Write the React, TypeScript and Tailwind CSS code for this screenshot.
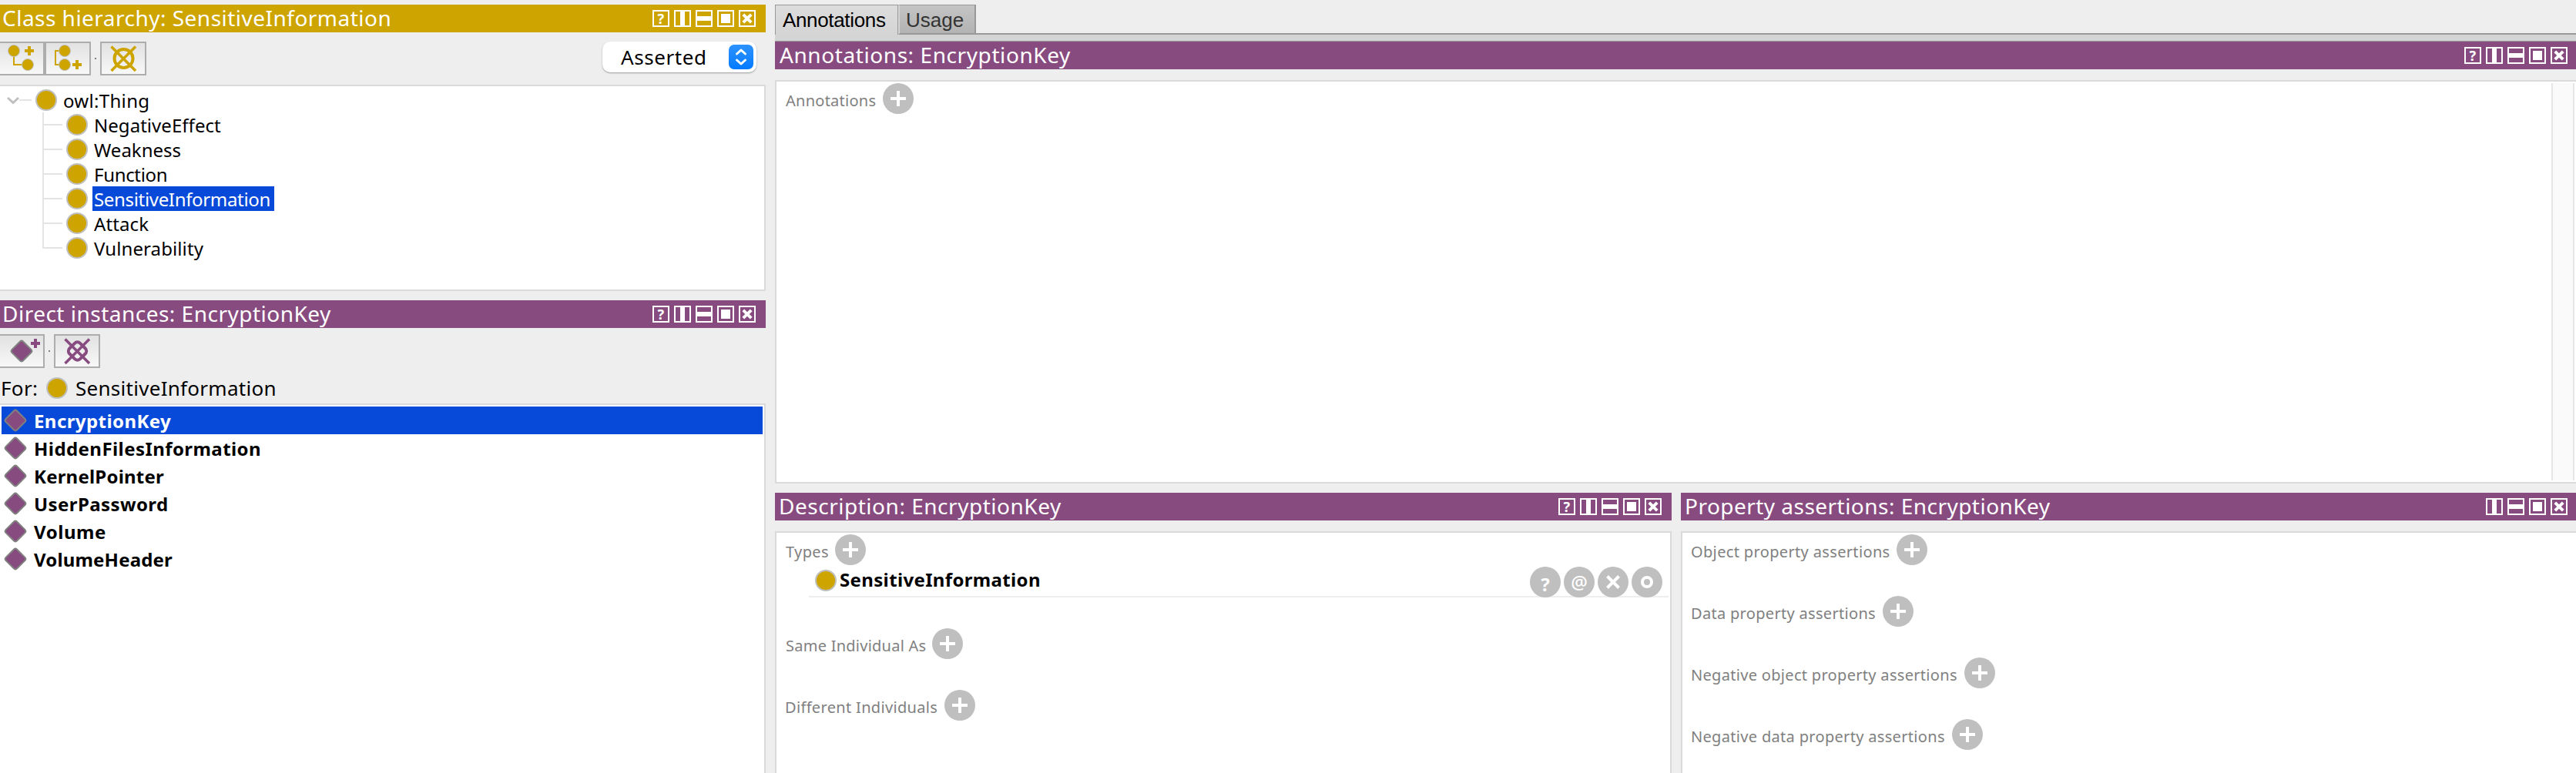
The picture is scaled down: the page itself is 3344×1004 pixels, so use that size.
import type { ReactNode } from 'react';

function TitleIcons({ help = true }: { help?: boolean }) {
  return (
    <div className="flex gap-1.5">
      {help && (
        <span className="flex size-[22px] items-center justify-center border-2 border-white text-[18px] leading-none font-bold text-white">
          ?
        </span>
      )}
      <span className="flex size-[22px] justify-center border-2 border-white">
        <span className="w-1.5 bg-white" />
      </span>
      <span className="flex size-[22px] items-center border-2 border-white">
        <span className="h-1.5 w-full bg-white" />
      </span>
      <span className="flex size-[22px] items-center justify-center border-2 border-white">
        <span className="size-3 bg-white" />
      </span>
      <span className="flex size-[22px] items-center justify-center border-2 border-white">
        <svg className="size-[14px]" viewBox="0 0 14 14" stroke="white" strokeWidth="4">
          <path d="M1.8 1.8 12.2 12.2M12.2 1.8 1.8 12.2" />
        </svg>
      </span>
    </div>
  );
}

function TitleBar({ title, className, help }: { title: string; className: string; help?: boolean }) {
  return (
    <div className={`flex h-9 shrink-0 items-center justify-between text-[28px] leading-9 text-white ${className}`}>
      <span className="-mt-0.5 whitespace-nowrap">{title}</span>
      <TitleIcons help={help} />
    </div>
  );
}

function ToolButton({ children }: { children: ReactNode }) {
  return (
    <div className="h-11 w-[60px] shrink-0 border-2 border-[#adadad] bg-linear-to-b from-[#e2e2e2] to-[#f8f8f8]">
      <svg className="h-10 w-14" viewBox="0 0 56 40" fill="none">
        {children}
      </svg>
    </div>
  );
}

function ClassDot({ className = '' }: { className?: string }) {
  return <span className={`size-7 shrink-0 rounded-full border-2 border-[#bfbfbf] bg-[#cda400] ${className}`} />;
}

function IndividualDiamond() {
  return (
    <svg className="size-8 shrink-0" viewBox="0 0 32 32">
      <rect x="5.8" y="5.8" width="20.4" height="20.4" rx="3" transform="rotate(45 16 16)" fill="#874b80" stroke="#808080" strokeWidth="2" />
    </svg>
  );
}

const classes: [string, string][] = [
  ['NegativeEffect', 'tracking-[0.04px]'],
  ['Weakness', 'tracking-normal'],
  ['Function', 'tracking-[-0.32px]'],
  ['SensitiveInformation', 'tracking-[-0.33px]'],
  ['Attack', 'tracking-[0.11px]'],
  ['Vulnerability', 'tracking-[0.1px]'],
];

function ClassTree() {
  return (
    <div className="flex h-[268px] shrink-0 flex-col border-y-2 border-r-2 border-[#dadada] bg-white pt-0.5 text-[24px] leading-8 text-black">
      <div className="flex h-8 items-center">
        <svg className="h-8 w-[46px]" viewBox="0 0 46 32" fill="none">
          <path d="M25 16H41" stroke="#e4e4e4" strokeWidth="2" />
          <path d="M10 13 17 19.5 24 13" stroke="#bfbfbf" strokeWidth="3" />
        </svg>
        <ClassDot />
        <span className="ml-2 pt-0.5 tracking-[0.32px]">owl:Thing</span>
      </div>
      {classes.map(([name, tracking], i) => (
        <div key={name} className="flex h-8 items-center">
          <svg className="h-8 w-[86px]" viewBox="0 0 86 32" fill="none" stroke="#e4e4e4" strokeWidth="2">
            <path d={i === classes.length - 1 ? 'M56 0V16H81' : 'M56 0V32M56 16H81'} />
          </svg>
          <ClassDot />
          <span
            className={`ml-1.5 h-8 pt-px pl-0.5 ${tracking} ${name === 'SensitiveInformation' ? 'w-[236px] bg-[#0749d9] text-white' : ''}`}
          >
            {name}
          </span>
        </div>
      ))}
    </div>
  );
}

const instances: [string, string][] = [
  ['EncryptionKey', 'tracking-[0.42px]'],
  ['HiddenFilesInformation', 'tracking-[0.43px]'],
  ['KernelPointer', 'tracking-[0.21px]'],
  ['UserPassword', 'tracking-[0.42px]'],
  ['Volume', 'tracking-[0.55px]'],
  ['VolumeHeader', 'tracking-[0.17px]'],
];

function AddButton() {
  return (
    <svg className="size-10 shrink-0" viewBox="0 0 40 40">
      <circle cx="20" cy="20" r="20" fill="#bfbfbf" />
      <path d="M10 20H30M20 10V30" stroke="white" strokeWidth="4" />
    </svg>
  );
}

function Section({ label, className }: { label: string; className: string }) {
  return (
    <div className="flex h-10 items-center text-[20px] leading-6 text-[#808080]">
      <span className={`pt-1.5 whitespace-nowrap ${className}`}>{label}</span>
      <AddButton />
    </div>
  );
}

function RoundButton({ children }: { children: ReactNode }) {
  return (
    <span className="flex size-10 items-center justify-center rounded-full bg-[#bfbfbf] text-[24px] leading-none text-white">
      {children}
    </span>
  );
}

export default function App() {
  return (
    <div className="flex h-[1004px] w-[3344px] gap-3 overflow-hidden bg-[#eeeeee] pt-1.5 font-['Noto_Sans',sans-serif]">
      <div className="flex w-[994px] shrink-0 flex-col">
        <TitleBar title="Class hierarchy: SensitiveInformation" className="bg-[#cda400] pr-[13px] pl-[3px] tracking-[0.48px]" />
        <div className="flex h-[68px] shrink-0 items-start justify-between pt-3 pr-3">
          <div className="-ml-0.5 flex items-center">
            <ToolButton>
              <path d="M18 16V28H30" stroke="#cda400" strokeWidth="2" />
              <circle cx="18" cy="10" r="7.5" fill="#cda400" stroke="#bfbfbf" />
              <circle cx="36" cy="28" r="7.5" fill="#cda400" stroke="#bfbfbf" />
              <path d="M32 10H44M38 4V16" stroke="#cda400" strokeWidth="4" />
            </ToolButton>
            <ToolButton>
              <path d="M18 10H12V28H18" stroke="#cda400" strokeWidth="2" />
              <circle cx="24" cy="10" r="7.5" fill="#cda400" stroke="#bfbfbf" />
              <circle cx="24" cy="28" r="7.5" fill="#cda400" stroke="#bfbfbf" />
              <path d="M34 28H46M40 22V34" stroke="#cda400" strokeWidth="4" />
            </ToolButton>
            <span className="mx-[5px] size-0.5 bg-[#808080]" />
            <ToolButton>
              <circle cx="28.5" cy="20" r="12" stroke="#cda400" strokeWidth="4" />
              <path d="M12.5 4.5 44 36M44 4.5 12.5 36" stroke="#cda400" strokeWidth="3.5" />
            </ToolButton>
          </div>
          <div className="flex h-10 w-[200px] items-center justify-between rounded-[10px] bg-white pr-1 pl-6 text-[26px] leading-10 text-black shadow-[0_1px_2px_rgba(0,0,0,0.35)]">
            <span className="tracking-[0.58px]">Asserted</span>
            <span className="size-8 rounded-[7px] bg-linear-to-b from-[#2b92ff] to-[#007aff]">
              <svg className="size-8" viewBox="0 0 32 32" fill="none" stroke="white" strokeWidth="3" strokeLinecap="round" strokeLinejoin="round">
                <path d="M10.5 12 16 7 21.5 12M10.5 20 16 25 21.5 20" />
              </svg>
            </span>
          </div>
        </div>
        <ClassTree />
        <TitleBar title="Direct instances: EncryptionKey" className="mt-3 bg-[#874b80] pr-[13px] pl-[3px] tracking-[0.49px]" />
        <div className="-ml-0.5 flex h-[52px] shrink-0 items-center pt-2">
          <ToolButton>
            <rect x="17.8" y="9.8" width="20.4" height="20.4" rx="3" transform="rotate(45 28 20)" fill="#874b80" stroke="#808080" strokeWidth="2" />
            <path d="M40 10H52M46 4V16" stroke="#874b80" strokeWidth="4" />
          </ToolButton>
          <span className="mx-[5px] size-0.5 bg-[#808080]" />
          <ToolButton>
            <rect x="18.8" y="10.3" width="19.4" height="19.4" rx="5" transform="rotate(45 28.5 20)" stroke="#874b80" strokeWidth="4" />
            <path d="M12.5 4.5 44 36M44 4.5 12.5 36" stroke="#874b80" strokeWidth="3.5" />
          </ToolButton>
        </div>
        <div className="flex h-[46px] shrink-0 items-center pt-1.5 text-[26px] leading-9 text-black">
          <span className="w-[60px] pl-px tracking-[0.35px]">For:</span>
          <ClassDot />
          <span className="ml-2.5 tracking-[0.28px]">SensitiveInformation</span>
        </div>
        <div className="flex-1 border-t-2 border-r-2 border-[#dadada] bg-white pt-0.5 pr-0.5 pl-0.5 text-[24px] leading-9 font-bold text-black">
          {instances.map(([name, tracking], i) => (
            <div key={name} className={`flex h-9 items-center pl-0.5 ${i === 0 ? 'bg-[#0749d9] text-white' : ''}`}>
              <IndividualDiamond />
              <span className={`ml-2 pt-0.5 ${tracking}`}>{name}</span>
            </div>
          ))}
        </div>
      </div>

      <div className="flex min-w-0 flex-1 flex-col">
        <div className="flex h-[39px] shrink-0 font-['Liberation_Sans',sans-serif] text-[26px] leading-[38px]">
          <span className="w-[160px] border-t border-r border-l border-[#999999] bg-linear-to-b from-[#dddddd] to-[#d4d4d4] pl-[9px] tracking-[-0.34px] text-black">
            Annotations
          </span>
          <span className="w-[101px] border-t border-r-2 border-b-2 border-l-2 border-[#999999] border-l-[#d4d4d4] bg-linear-to-b from-[#c4c4c4] to-[#b3b3b3] pl-2 text-[#333333]">
            Usage
          </span>
          <span className="flex-1 border-b-2 border-[#999999]" />
        </div>
        <div className="h-[9px] shrink-0 border-b border-[#999999] bg-[#d4d4d4]" />
        <TitleBar title="Annotations: EncryptionKey" className="bg-[#874b80] pr-[11px] pl-1.5 tracking-[0.58px]" />
        <div className="mt-3.5 flex h-[524px] shrink-0 justify-between border-y-2 border-l-2 border-[#dadada] bg-white py-0.5 pr-0.5">
          <div className="pl-2.5">
            <Section label="Annotations" className="w-32 pl-0.5 tracking-[0.26px]" />
          </div>
          <div className="w-[30px] border-x-2 border-[#e6e6e6] bg-[#fafafa]" />
        </div>
        <div className="mt-3 flex flex-1 gap-3">
          <div className="flex w-[1164px] flex-col">
            <TitleBar title="Description: EncryptionKey" className="bg-[#874b80] pr-[13px] pl-[5px] tracking-[0.52px]" />
            <div className="mt-3.5 flex-1 border-x-2 border-t-2 border-[#dadada] bg-white pt-0.5 pr-0.5 pl-2.5">
              <Section label="Types" className="w-[66px] pl-0.5 tracking-[0.38px]" />
              <div className="mt-0.5 ml-8 flex h-10 items-center border-b-2 border-[#eeeeee] pr-2 pl-2">
                <ClassDot className="-mt-0.5" />
                <span className="-mt-1 ml-1 text-[24px] leading-8 font-bold tracking-[0.35px] text-black">SensitiveInformation</span>
                <div className="-mb-0.5 ml-auto flex gap-1">
                  <RoundButton>
                    <span className="pt-1.5 font-bold">?</span>
                  </RoundButton>
                  <RoundButton>
                    <span className="font-medium">@</span>
                  </RoundButton>
                  <RoundButton>
                    <svg className="size-5" viewBox="0 0 20 20" stroke="white" strokeWidth="4">
                      <path d="M2.5 2.5 17.5 17.5M17.5 2.5 2.5 17.5" />
                    </svg>
                  </RoundButton>
                  <RoundButton>
                    <svg className="size-5" viewBox="0 0 20 20" fill="none" stroke="white" strokeWidth="4">
                      <circle cx="10" cy="10" r="6" />
                    </svg>
                  </RoundButton>
                </div>
              </div>
              <div className="mt-10 flex flex-col gap-10">
                <Section label="Same Individual As" className="w-48 pl-0.5 tracking-[0.25px]" />
                <Section label="Different Individuals" className="w-52 pl-px tracking-[0.33px]" />
              </div>
            </div>
          </div>
          <div className="flex flex-1 flex-col">
            <TitleBar title="Property assertions: EncryptionKey" help={false} className="bg-[#874b80] pr-[11px] pl-[5px] tracking-[0.47px]" />
            <div className="mt-3.5 flex flex-1 flex-col gap-10 border-t-2 border-l-2 border-[#dadada] bg-white pt-0.5 pl-2.5">
              <Section label="Object property assertions" className="w-[268px] pl-px tracking-[0.35px]" />
              <Section label="Data property assertions" className="w-[250px] pl-px tracking-[0.31px]" />
              <Section label="Negative object property assertions" className="w-[356px] pl-px tracking-[0.31px]" />
              <Section label="Negative data property assertions" className="w-[340px] pl-px tracking-[0.32px]" />
            </div>
          </div>
        </div>
      </div>
    </div>
  );
}
